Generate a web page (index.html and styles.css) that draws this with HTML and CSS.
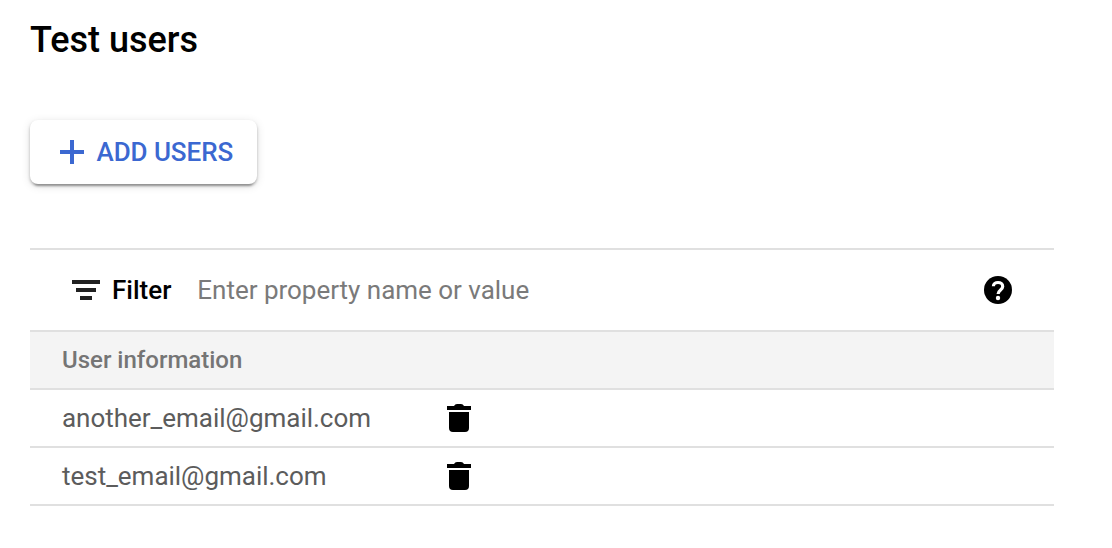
FILE: index.html
```html
<!DOCTYPE html>
<html lang="en">
<head>
<meta charset="utf-8">
<title>Test users</title>
<link rel="stylesheet" href="styles.css">
</head>
<body>
<main class="page">
  <h1 class="title">Test users</h1>
  <button class="add-button" type="button">
    <svg class="plus" viewBox="0 0 24 24"><path d="M10 0h4v10h10v4H14v10h-4V14H0v-4h10z"/></svg>
    <span class="add-label">ADD USERS</span>
  </button>
  <section class="table">
    <div class="filter">
      <svg class="filter-icon" viewBox="0 0 28 20"><path d="M0 0h28v4H0zM4 8h20v4H4zM8 16h12v4H8z"/></svg>
      <span class="filter-label">Filter</span>
      <span class="filter-hint">Enter property name or value</span>
      <svg class="help" viewBox="0 0 28 28"><circle cx="14" cy="14" r="14"/><path class="help-mark" d="M9.4 10.2c0-2.3 2-3.7 4.6-3.7s4.7 1.5 4.7 4c0 3.4-4.6 3.5-4.6 7.5"/><circle class="help-dot" cx="14" cy="22" r="2.2"/></svg>
    </div>
    <div class="row head"><span class="head-label">User information</span></div>
    <div class="row">
      <span class="email">another_email@gmail.com</span>
      <svg class="trash" viewBox="0 0 24 28"><path d="M2 8h20v16a4 4 0 0 1-4 4H6a4 4 0 0 1-4-4zM0 2h7q1-2 3-2h4q2 0 3 2h7v4H0z"/></svg>
    </div>
    <div class="row">
      <span class="email">test_email@gmail.com</span>
      <svg class="trash" viewBox="0 0 24 28"><path d="M2 8h20v16a4 4 0 0 1-4 4H6a4 4 0 0 1-4-4zM0 2h7q1-2 3-2h4q2 0 3 2h7v4H0z"/></svg>
    </div>
  </section>
</main>
</body>
</html>
```
FILE: styles.css
```css
* { box-sizing: border-box; }
body { margin: 0; background: #fff; color: #000; font-family: Roboto, sans-serif; }
svg { display: block; flex: none; }
.page { padding: 20px 58px 0 30px; }
.title { margin: 0; font-size: 36px; line-height: 40px; font-weight: 500; }
.add-button {
  display: flex; align-items: center; gap: 12.5px;
  width: 227px; height: 64px; margin-top: 60px; padding: 0 0 0 30px;
  border: 0; border-radius: 8px; background: #fff; color: #3b68d1;
  font: 500 26px/32px Roboto, sans-serif; white-space: nowrap;
  box-shadow: 0 6px 2px -4px rgba(0,0,0,.2), 0 2px 3px rgba(0,0,0,.25), 0 2px 10px rgba(0,0,0,.12);
}
.add-label { letter-spacing: -.06px; }
.plus { width: 24px; height: 24px; fill: #3b68d1; }
.table { margin-top: 64px; border-top: 2px solid #e0e0e0; }
.filter { display: flex; align-items: center; height: 82px; padding: 0 42px; border-bottom: 2px solid #e0e0e0; }
.filter-icon { width: 28px; height: 20px; fill: #212121; }
.filter-label { margin-left: 12px; font-size: 26px; font-weight: 500; }
.filter-hint { margin-left: 26px; font-size: 26px; letter-spacing: -.02px; color: #7a7a7a; }
.help { width: 28px; height: 28px; margin-left: auto; }
.help-mark { fill: none; stroke: #fff; stroke-width: 3.2; }
.help-dot { fill: #fff; }
.row { display: grid; grid-template-columns: 385px 1fr; align-items: center; height: 58px; padding-left: 32px; border-bottom: 2px solid #e0e0e0; color: #5c5c5c; font-size: 26px; white-space: nowrap; }
.email { letter-spacing: -.02px; }
.head { background: #f4f4f4; color: #757575; font-size: 24px; font-weight: 500; }
.trash { width: 24px; height: 28px; fill: #000; }
```
